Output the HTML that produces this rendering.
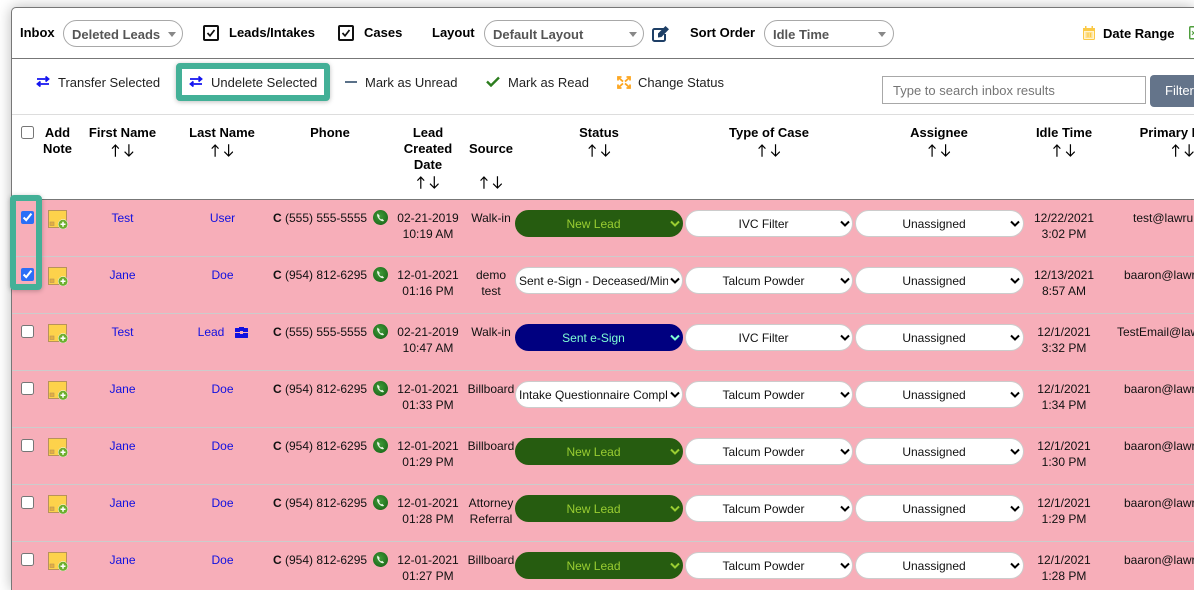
<!DOCTYPE html>
<html lang="en">
<head>
<meta charset="utf-8">
<title>Inbox</title>
<style>
html,body{margin:0;padding:0;background:#fff;width:1194px;height:590px;overflow:hidden}
body{font-family:"Liberation Sans",Arial,sans-serif;font-size:12px;color:#000}
#wrap{position:absolute;left:0;top:0;width:1194px;height:590px;overflow:hidden}
#card{position:absolute;left:11px;top:7px;width:1183px;height:583px;background:#fff;border:1px solid #777;border-right:0;border-bottom:0;border-radius:5px 0 0 0;box-sizing:border-box;box-shadow:0 0 14px rgba(0,0,0,.28)}
.a{position:absolute;white-space:nowrap}
.b{font-weight:bold;font-size:13px;line-height:16px}
.t{font-size:13px;line-height:16px;color:#222}
.hr{position:absolute;left:12px;width:1182px;height:1px}
.pill{position:absolute;top:20px;height:27px;box-sizing:border-box;border:1px solid #a8a8a8;border-radius:14px;background:#fff;font-weight:bold;font-size:13px;line-height:27px;color:#555;padding-left:8px}
.tri{position:absolute;top:11px;width:0;height:0;border-left:4px solid transparent;border-right:4px solid transparent;border-top:5px solid #888}
.cb{position:absolute;top:25px;width:16px;height:16px;box-sizing:border-box;border:2px solid #111;border-radius:2px}
.h{position:absolute;transform:translateX(-50%);text-align:center;font-weight:bold;font-size:13px;line-height:16px;white-space:nowrap}
.arr{display:block;width:22px;height:13px;margin:3px auto 0}
.row{position:absolute;left:12px;width:1182px;height:57px;background:#f7aeb9;border-bottom:1px solid #ccc;box-sizing:border-box}
.c{position:absolute;top:10px;transform:translateX(-50%);text-align:center;line-height:16px;white-space:nowrap;color:#111}
.n{color:#1010e0}
.l{position:absolute;top:10px;line-height:16px;white-space:nowrap;color:#111}
.row input{position:absolute;left:9px;top:11px;width:13px;height:13px;margin:0;accent-color:#2b6ef7}
.s{position:absolute;top:10px;height:27px;box-sizing:border-box;border:1px solid #ccc;border-radius:14px;background:#fff;color:#111;font:12px "Liberation Sans",Arial,sans-serif;appearance:none;-webkit-appearance:none;padding:0 14px 0 3px;text-align:center;text-align-last:center;outline:0;margin:0}
.st{left:503px;width:168px}.ty{left:673px;width:168px}.as{left:843px;width:169px}
.st.left{text-align:left;text-align-last:left}
.gr{background:#265c10;color:#9acd32;border-color:#265c10}
.nv{background:#000080;color:#7fffd4;border-color:#000080}
.chev{position:absolute;top:20px;width:10px;height:7px;pointer-events:none}
.c1{left:658px}.c2{left:828px}.c3{left:998px}
.i{position:absolute}
.teal{position:absolute;box-sizing:border-box;border:6px solid #43b097;border-radius:4px;box-shadow:0 1px 5px rgba(0,0,0,.25)}
</style>
</head>
<body>
<div id="wrap">
<svg width="0" height="0" style="position:absolute">
<defs>
<radialGradient id="pg" cx=".45" cy=".4" r=".65"><stop offset="0" stop-color="#3f9a38"/><stop offset="1" stop-color="#1c6a1a"/></radialGradient>
<symbol id="note" viewBox="0 0 20 19">
<rect x=".5" y=".5" width="18" height="17" fill="#fdd24b" stroke="#b8925a"/>
<rect x="2" y="12" width="4" height="3.500" fill="#e3ae42" stroke="#b8925a" stroke-width=".6"/>
<circle cx="15" cy="14.300" r="4.800" fill="#6cae2d" stroke="#fff" stroke-width=".5"/>
<path d="M15 11.800v5M12.500 14.300h5" stroke="#fff" stroke-width="1.500"/>
</symbol>
<symbol id="ph" viewBox="0 0 15 15">
<circle cx="7.500" cy="7.500" r="7.500" fill="url(#pg)"/>
<path d="M4.800 3.600c-.8.500-.9 1.600-.4 2.900.7 1.900 2.300 3.700 4.100 4.500 1.100.4 2 .3 2.600-.4l-1.900-1.800-1 .6c-.9-.4-1.800-1.500-2.100-2.500l.8-.8z" fill="#e6f5e0"/>
</symbol>
<symbol id="tr" viewBox="0 0 14 11">
<path d="M1 3h11M9.500 .5L12.500 3 9.500 5.500" fill="none" stroke="#1414f0" stroke-width="1.800"/>
<path d="M13 8H2M4.500 5.500L1.500 8 4.500 10.500" fill="none" stroke="#1414f0" stroke-width="1.800"/>
</symbol>
<symbol id="dn" viewBox="0 0 10 7">
<path d="M1 1.500l4 4 4-4" fill="none" stroke="currentColor" stroke-width="2"/>
</symbol>
<symbol id="sort" viewBox="0 0 22 13">
<path d="M4 12.800V1M.6 4.600L4 1l3.400 3.600" fill="none" stroke="#000" stroke-width="1.200"/>
<path d="M17.500 .2V12M13.200 7.700l4.300 4.300 4.300-4.300" fill="none" stroke="#000" stroke-width="1.200"/>
</symbol>
</defs>
</svg>

<div id="card"></div>

<!-- top bar -->
<div class="a b" style="left:20px;top:25px">Inbox</div>
<div class="pill" style="left:63px;width:120px">Deleted Leads<span class="tri" style="left:104px"></span></div>
<div class="cb" style="left:203px"><svg width="12" height="12" viewBox="0 0 12 12" style="display:block"><path d="M2.500 6l2.500 2.800L9.500 3" fill="none" stroke="#111" stroke-width="1.700"/></svg></div>
<div class="a b" style="left:229px;top:25px">Leads/Intakes</div>
<div class="cb" style="left:338px"><svg width="12" height="12" viewBox="0 0 12 12" style="display:block"><path d="M2.500 6l2.500 2.800L9.500 3" fill="none" stroke="#111" stroke-width="1.700"/></svg></div>
<div class="a b" style="left:364px;top:25px">Cases</div>
<div class="a b" style="left:432px;top:25px">Layout</div>
<div class="pill" style="left:484px;width:160px">Default Layout<span class="tri" style="left:144px"></span></div>
<svg class="i" style="left:652px;top:25px" width="18" height="17" viewBox="0 0 18 17"><path d="M12 4H2.500A1.500 1.500 0 0 0 1 5.500v9A1.500 1.500 0 0 0 2.500 16h9a1.500 1.500 0 0 0 1.500-1.500V9" fill="none" stroke="#1e3f66" stroke-width="2"/><path d="M6 8.500L13.500 1 17 4.300 9.500 12 6 12.500z" fill="#1e3f66"/></svg>
<div class="a b" style="left:690px;top:25px">Sort Order</div>
<div class="pill" style="left:764px;width:130px">Idle Time<span class="tri" style="left:113px"></span></div>
<svg class="i" style="left:1083px;top:26px" width="12" height="14" viewBox="0 0 12 14"><rect x=".5" y="2.500" width="11" height="11" rx="1" fill="#fff3cf" stroke="#fbc945"/><rect x="0" y="2" width="12" height="3" fill="#fbc945"/><rect x="2" y="0" width="1.500" height="3" fill="#fbc945"/><rect x="8.500" y="0" width="1.500" height="3" fill="#fbc945"/><path d="M2.500 7h7M2.500 9h7M2.500 11h7M5 6.500v5M7.500 6.500v5" stroke="#fbc945"/></svg>
<div class="a" style="left:1103px;top:26px;font-weight:bold;font-size:13px;line-height:16px">Date Range</div>
<svg class="i" style="left:1189px;top:26px" width="5" height="14" viewBox="0 0 5 14"><rect x=".75" y=".75" width="12" height="12" rx="1" fill="#fff" stroke="#4f9e3d" stroke-width="1.500"/><path d="M3 9l3-4M3 5l3 4" stroke="#4f9e3d"/></svg>

<div class="hr" style="top:58px;background:#777"></div>

<!-- action bar -->
<svg class="i" style="left:36px;top:76px" width="14" height="11"><use href="#tr"/></svg>
<div class="a t" style="left:58px;top:75px">Transfer Selected</div>
<div class="teal" style="left:176px;top:63px;width:154px;height:38px;background:#fff"></div>
<svg class="i" style="left:189px;top:76px" width="14" height="11"><use href="#tr"/></svg>
<div class="a t" style="left:211px;top:75px">Undelete Selected</div>
<div class="i" style="left:345px;top:81px;width:12px;height:2px;background:#5a7189"></div>
<div class="a t" style="left:365px;top:75px">Mark as Unread</div>
<svg class="i" style="left:486px;top:76px" width="14" height="11" viewBox="0 0 14 11"><path d="M1 5.500l4 4L13 1.500" fill="none" stroke="#2c7d1e" stroke-width="2.400"/></svg>
<div class="a t" style="left:508px;top:75px">Mark as Read</div>
<svg class="i" style="left:617px;top:76px" width="14" height="13" viewBox="0 0 14 13"><g fill="none" stroke="#fda51e" stroke-width="1.800"><path d="M1 4.500V1h3.500M13 4.500V1H9.500M1 8.500V12h3.500M13 8.500V12H9.500"/><path d="M2 2l4 3.600M12 2L8 5.600M2 11l4-3.600M12 11L8 7.400"/></g></svg>
<div class="a t" style="left:638px;top:75px">Change Status</div>
<input class="a" type="text" placeholder="Type to search inbox results" style="left:882px;top:76px;width:264px;height:28px;box-sizing:border-box;border:1px solid #a8a8a8;padding:0 10px;font:13px 'Liberation Sans',Arial,sans-serif;outline:0;margin:0">
<div class="a" style="left:1150px;top:75px;width:44px;height:32px;background:#64748a;border-radius:4px 0 0 4px;color:#fff;font-size:13px;line-height:31px;padding-left:15px;box-sizing:border-box;overflow:hidden">Filter</div>

<div class="hr" style="top:114px;background:#ddd"></div>

<!-- table header -->
<input class="a" type="checkbox" style="left:21px;top:126px;width:13px;height:13px;margin:0">
<div class="h" style="left:57.500px;top:125px">Add<br>Note</div>
<div class="h" style="left:122.500px;top:125px">First Name<svg class="arr"><use href="#sort"/></svg></div>
<div class="h" style="left:222px;top:125px">Last Name<svg class="arr"><use href="#sort"/></svg></div>
<div class="h" style="left:330px;top:125px">Phone</div>
<div class="h" style="left:428px;top:125px">Lead<br>Created<br>Date<svg class="arr"><use href="#sort"/></svg></div>
<div class="h" style="left:491px;top:141px">Source<svg class="arr" style="margin-top:19px"><use href="#sort"/></svg></div>
<div class="h" style="left:599px;top:125px">Status<svg class="arr"><use href="#sort"/></svg></div>
<div class="h" style="left:769px;top:125px">Type of Case<svg class="arr"><use href="#sort"/></svg></div>
<div class="h" style="left:939px;top:125px">Assignee<svg class="arr"><use href="#sort"/></svg></div>
<div class="h" style="left:1064px;top:125px">Idle Time<svg class="arr"><use href="#sort"/></svg></div>
<div class="h" style="left:1183px;top:125px">Primary Email<svg class="arr"><use href="#sort"/></svg></div>

<div class="hr" style="top:199px;background:#777"></div>

<!-- rows -->
<div class="row" style="top:200px">
<input type="checkbox" checked>
<svg class="i" style="left:36px;top:10px" width="20" height="19"><use href="#note"/></svg>
<div class="c n" style="left:110.500px">Test</div>
<div class="c n" style="left:210.500px">User</div>
<div class="l" style="left:261px"><b>C</b> (555) 555-5555</div>
<svg class="i" style="left:360.500px;top:9.500px" width="15" height="15"><use href="#ph"/></svg>
<div class="c" style="left:416px">02-21-2019<br>10:19 AM</div>
<div class="c" style="left:479px">Walk-in</div>
<select class="s st gr"><option>New Lead</option></select><svg class="chev c1" style="color:#9acd32"><use href="#dn"/></svg>
<select class="s ty"><option>IVC Filter</option></select><svg class="chev c2"><use href="#dn"/></svg>
<select class="s as"><option>Unassigned</option></select><svg class="chev c3"><use href="#dn"/></svg>
<div class="c" style="left:1052px">12/22/2021<br>3:02 PM</div>
<div class="l" style="left:1121px">test@lawruler.com</div>
</div>

<div class="row" style="top:257px">
<input type="checkbox" checked>
<svg class="i" style="left:36px;top:10px" width="20" height="19"><use href="#note"/></svg>
<div class="c n" style="left:110.500px">Jane</div>
<div class="c n" style="left:210.500px">Doe</div>
<div class="l" style="left:261px"><b>C</b> (954) 812-6295</div>
<svg class="i" style="left:360.500px;top:9.500px" width="15" height="15"><use href="#ph"/></svg>
<div class="c" style="left:416px">12-01-2021<br>01:16 PM</div>
<div class="c" style="left:479px">demo<br>test</div>
<select class="s st left"><option>Sent e-Sign - Deceased/Minor</option></select><svg class="chev c1"><use href="#dn"/></svg>
<select class="s ty"><option>Talcum Powder</option></select><svg class="chev c2"><use href="#dn"/></svg>
<select class="s as"><option>Unassigned</option></select><svg class="chev c3"><use href="#dn"/></svg>
<div class="c" style="left:1052px">12/13/2021<br>8:57 AM</div>
<div class="l" style="left:1112px">baaron@lawruler.com</div>
</div>

<div class="row" style="top:314px">
<input type="checkbox">
<svg class="i" style="left:36px;top:10px" width="20" height="19"><use href="#note"/></svg>
<div class="c n" style="left:110.500px">Test</div>
<div class="c n" style="left:199px">Lead</div>
<svg class="i" style="left:223px;top:12px" width="13" height="12" viewBox="0 0 13 12"><path d="M4 2V1h5v1h3.500a.5.5 0 0 1 .5.500V6H8V5H5v1H0V2.500A.5.5 0 0 1 .5 2zM0 7h5v1h3V7h5v4.500a.5.5 0 0 1-.5.500H.5a.5.5 0 0 1-.5-.500z" fill="#1010e0"/></svg>
<div class="l" style="left:261px"><b>C</b> (555) 555-5555</div>
<svg class="i" style="left:360.500px;top:9.500px" width="15" height="15"><use href="#ph"/></svg>
<div class="c" style="left:416px">02-21-2019<br>10:47 AM</div>
<div class="c" style="left:479px">Walk-in</div>
<select class="s st nv"><option>Sent e-Sign</option></select><svg class="chev c1" style="color:#7fffd4"><use href="#dn"/></svg>
<select class="s ty"><option>IVC Filter</option></select><svg class="chev c2"><use href="#dn"/></svg>
<select class="s as"><option>Unassigned</option></select><svg class="chev c3"><use href="#dn"/></svg>
<div class="c" style="left:1052px">12/1/2021<br>3:32 PM</div>
<div class="l" style="left:1105px">TestEmail@lawruler.com</div>
</div>

<div class="row" style="top:371px">
<input type="checkbox">
<svg class="i" style="left:36px;top:10px" width="20" height="19"><use href="#note"/></svg>
<div class="c n" style="left:110.500px">Jane</div>
<div class="c n" style="left:210.500px">Doe</div>
<div class="l" style="left:261px"><b>C</b> (954) 812-6295</div>
<svg class="i" style="left:360.500px;top:9.500px" width="15" height="15"><use href="#ph"/></svg>
<div class="c" style="left:416px">12-01-2021<br>01:33 PM</div>
<div class="c" style="left:479px">Billboard</div>
<select class="s st left"><option>Intake Questionnaire Completed</option></select><svg class="chev c1"><use href="#dn"/></svg>
<select class="s ty"><option>Talcum Powder</option></select><svg class="chev c2"><use href="#dn"/></svg>
<select class="s as"><option>Unassigned</option></select><svg class="chev c3"><use href="#dn"/></svg>
<div class="c" style="left:1052px">12/1/2021<br>1:34 PM</div>
<div class="l" style="left:1112px">baaron@lawruler.com</div>
</div>

<div class="row" style="top:428px">
<input type="checkbox">
<svg class="i" style="left:36px;top:10px" width="20" height="19"><use href="#note"/></svg>
<div class="c n" style="left:110.500px">Jane</div>
<div class="c n" style="left:210.500px">Doe</div>
<div class="l" style="left:261px"><b>C</b> (954) 812-6295</div>
<svg class="i" style="left:360.500px;top:9.500px" width="15" height="15"><use href="#ph"/></svg>
<div class="c" style="left:416px">12-01-2021<br>01:29 PM</div>
<div class="c" style="left:479px">Billboard</div>
<select class="s st gr"><option>New Lead</option></select><svg class="chev c1" style="color:#9acd32"><use href="#dn"/></svg>
<select class="s ty"><option>Talcum Powder</option></select><svg class="chev c2"><use href="#dn"/></svg>
<select class="s as"><option>Unassigned</option></select><svg class="chev c3"><use href="#dn"/></svg>
<div class="c" style="left:1052px">12/1/2021<br>1:30 PM</div>
<div class="l" style="left:1112px">baaron@lawruler.com</div>
</div>

<div class="row" style="top:485px">
<input type="checkbox">
<svg class="i" style="left:36px;top:10px" width="20" height="19"><use href="#note"/></svg>
<div class="c n" style="left:110.500px">Jane</div>
<div class="c n" style="left:210.500px">Doe</div>
<div class="l" style="left:261px"><b>C</b> (954) 812-6295</div>
<svg class="i" style="left:360.500px;top:9.500px" width="15" height="15"><use href="#ph"/></svg>
<div class="c" style="left:416px">12-01-2021<br>01:28 PM</div>
<div class="c" style="left:479px">Attorney<br>Referral</div>
<select class="s st gr"><option>New Lead</option></select><svg class="chev c1" style="color:#9acd32"><use href="#dn"/></svg>
<select class="s ty"><option>Talcum Powder</option></select><svg class="chev c2"><use href="#dn"/></svg>
<select class="s as"><option>Unassigned</option></select><svg class="chev c3"><use href="#dn"/></svg>
<div class="c" style="left:1052px">12/1/2021<br>1:29 PM</div>
<div class="l" style="left:1112px">baaron@lawruler.com</div>
</div>

<div class="row" style="top:542px;height:48px;border-bottom:0">
<input type="checkbox">
<svg class="i" style="left:36px;top:10px" width="20" height="19"><use href="#note"/></svg>
<div class="c n" style="left:110.500px">Jane</div>
<div class="c n" style="left:210.500px">Doe</div>
<div class="l" style="left:261px"><b>C</b> (954) 812-6295</div>
<svg class="i" style="left:360.500px;top:9.500px" width="15" height="15"><use href="#ph"/></svg>
<div class="c" style="left:416px">12-01-2021<br>01:27 PM</div>
<div class="c" style="left:479px">Billboard</div>
<select class="s st gr"><option>New Lead</option></select><svg class="chev c1" style="color:#9acd32"><use href="#dn"/></svg>
<select class="s ty"><option>Talcum Powder</option></select><svg class="chev c2"><use href="#dn"/></svg>
<select class="s as"><option>Unassigned</option></select><svg class="chev c3"><use href="#dn"/></svg>
<div class="c" style="left:1052px">12/1/2021<br>1:28 PM</div>
<div class="l" style="left:1112px">baaron@lawruler.com</div>
</div>

<div class="teal" style="left:10px;top:195px;width:32px;height:95px"></div>
</div>
</body>
</html>
